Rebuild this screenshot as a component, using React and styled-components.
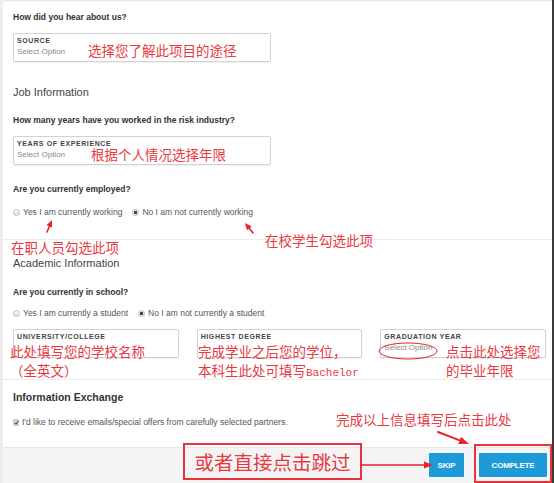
import React from "react";
import styled, { createGlobalStyle } from "styled-components";

const Global = createGlobalStyle`
  html, body { margin: 0; padding: 0; background: #fff; }
  body { font-family: "Liberation Sans", Arial, sans-serif; }
  * { box-sizing: border-box; }
`;

const RED = "#e8393f";

const Page = styled.div`
  position: relative;
  width: 554px;
  height: 483px;
  overflow: hidden;
  background: #ededed;
  display: flex;
`;

const Card = styled.div`
  margin-left: 3px;
  width: 551px;
  height: 483px;
  background: #fff;
  border-right: 2px solid #3b3b3b;
  display: flex;
  flex-direction: column;
  box-shadow: inset 0 3px 2px -2px rgba(0, 0, 0, 0.14);
`;

const Body = styled.div`
  padding: 12px 6px 0 10px;
  display: flex;
  flex-direction: column;
`;

const Question = styled.div`
  margin-top: ${(p) => p.$mt || 0}px;
  font-size: 8.5px;
  line-height: 10px;
  font-weight: bold;
  color: #333;
`;

const SectionTitle = styled.div`
  margin-top: ${(p) => p.$mt || 0}px;
  font-size: 11px;
  line-height: 14px;
  color: #444;
`;

const StrongTitle = styled(SectionTitle)`
  font-size: 10.5px;
  font-weight: bold;
  color: #333;
`;

const Divider = styled.div`
  margin: ${(p) => p.$mt || 0}px -6px 0 -10px;
  height: 1px;
  background: #ececec;
`;

const FieldGrid = styled.div`
  margin-top: ${(p) => p.$mt || 0}px;
  display: grid;
  grid-template-columns: repeat(${(p) => p.$cols}, 1fr);
  column-gap: 18px;
`;

const Field = styled.div`
  height: 29px;
  border: 1px solid #d2d2d2;
  border-radius: 2px;
  box-shadow: 0 1px 1px rgba(0, 0, 0, 0.06);
  padding: 2px 4px 0 3px;
  background: #fff;
`;

const FieldLabel = styled.div`
  font-size: 7px;
  line-height: 9px;
  font-weight: bold;
  letter-spacing: 0.6px;
  color: #444;
`;

const FieldValue = styled.div`
  margin-top: 2px;
  font-size: 8px;
  line-height: 10px;
  color: #8a8a8a;
  height: 10px;
`;

const RadioRow = styled.div`
  margin-top: ${(p) => p.$mt || 0}px;
  display: flex;
  align-items: center;
  height: 10px;
`;

const RadioOption = styled.label`
  display: inline-flex;
  align-items: center;
  gap: 3px;
  margin-right: ${(p) => p.$gap || 11}px;
  font-size: 8.5px;
  line-height: 10px;
  color: #555;
`;

const RadioDot = styled.span`
  width: 7px;
  height: 7px;
  border-radius: 50%;
  border: 1px solid #bdbdbd;
  background: ${(p) =>
    p.$on ? "radial-gradient(circle, #444 0 1.4px, #ececec 1.8px)" : "linear-gradient(#fdfdfd, #dcdcdc)"};
  flex: none;
`;

const CheckRow = styled.div`
  margin-top: ${(p) => p.$mt || 0}px;
  display: flex;
  align-items: center;
  gap: 3px;
  font-size: 8.5px;
  line-height: 10px;
  color: #555;
`;

const CheckBox = styled.span`
  width: 6px;
  height: 7px;
  background: #cfcfcf;
  border-radius: 1px;
  display: inline-flex;
  align-items: center;
  justify-content: center;
  flex: none;
`;

const Footer = styled.div`
  margin-top: ${(p) => p.$mt || 0}px;
  height: 37px;
  background: #f4f4f4;
  border-top: 1px solid #e6e6e6;
  display: flex;
  justify-content: flex-end;
  align-items: flex-start;
  gap: 15px;
  padding: 5px 5px 0 0;
`;

const Button = styled.button`
  width: ${(p) => p.$w}px;
  height: 24px;
  border: none;
  border-radius: 1px;
  background: #1c9bd8;
  color: #fff;
  font-family: "Liberation Sans", Arial, sans-serif;
  font-weight: bold;
  font-size: 8px;
  letter-spacing: -0.2px;
  padding: 0;
`;

const Note = styled.span`
  position: absolute;
  left: ${(p) => p.$x}px;
  top: ${(p) => p.$y}px;
  font-family: "Noto Sans CJK SC", sans-serif;
  font-size: ${(p) => p.$size || 13.5}px;
  line-height: 1;
  color: ${RED};
  white-space: nowrap;
`;

const Mono = styled.span`
  font-family: "Liberation Mono", monospace;
  font-size: 11px;
`;

const Frame = styled.div`
  position: absolute;
  left: ${(p) => p.$x}px;
  top: ${(p) => p.$y}px;
  width: ${(p) => p.$w}px;
  height: ${(p) => p.$h}px;
  border: 2px solid #e8333a;
  display: flex;
  align-items: center;
  justify-content: center;
`;

const FrameText = styled.span`
  font-family: "Noto Sans CJK SC", sans-serif;
  font-size: 19.5px;
  line-height: 1;
  color: ${RED};
  white-space: nowrap;
`;

const Overlay = styled.svg`
  position: absolute;
  left: 0;
  top: 0;
  pointer-events: none;
`;

function Arrow({ x1, y1, x2, y2, len = 8, w = 3.5, sw = 1.6 }) {
  const dx = x2 - x1;
  const dy = y2 - y1;
  const d = Math.hypot(dx, dy);
  const ux = dx / d;
  const uy = dy / d;
  const bx = x2 - ux * len;
  const by = y2 - uy * len;
  const px = -uy * w;
  const py = ux * w;
  return (
    <g>
      <line x1={x1} y1={y1} x2={bx} y2={by} stroke="#e8232b" strokeWidth={sw} strokeLinecap="round" />
      <polygon points={`${x2},${y2} ${bx + px},${by + py} ${bx - px},${by - py}`} fill="#e8232b" />
    </g>
  );
}

function Radio({ on, children, gap }) {
  return (
    <RadioOption $gap={gap}>
      <RadioDot $on={on} />
      {children}
    </RadioOption>
  );
}

function Select({ label, value }) {
  return (
    <Field>
      <FieldLabel>{label}</FieldLabel>
      <FieldValue>{value}</FieldValue>
    </Field>
  );
}

export default function App() {
  return (
    <>
      <Global />
      <Page>
        <Card>
          <Body>
            <Question>How did you hear about us?</Question>
            <FieldGrid $cols={2} $mt={11}>
              <Select label="SOURCE" value="Select Option" />
            </FieldGrid>

            <SectionTitle $mt={23}>Job Information</SectionTitle>
            <Question $mt={16}>How many years have you worked in the risk industry?</Question>
            <FieldGrid $cols={2} $mt={11}>
              <Select label="YEARS OF EXPERIENCE" value="Select Option" />
            </FieldGrid>

            <Question $mt={19}>Are you currently employed?</Question>
            <RadioRow $mt={13}>
              <Radio gap={10}>Yes I am currently working</Radio>
              <Radio on>No I am not currently working</Radio>
            </RadioRow>
            <Divider $mt={22} />

            <SectionTitle $mt={16}>Academic Information</SectionTitle>
            <Question $mt={17}>Are you currently in school?</Question>
            <RadioRow $mt={11}>
              <Radio gap={10}>Yes I am currently a student</Radio>
              <Radio on>No I am not currently a student</Radio>
            </RadioRow>
            <FieldGrid $cols={3} $mt={11}>
              <Select label="UNIVERSITY/COLLEGE" value="" />
              <Select label="HIGHEST DEGREE" value="" />
              <Select label="GRADUATION YEAR" value="Select Option" />
            </FieldGrid>
            <Divider $mt={21} />

            <StrongTitle $mt={10}>Information Exchange</StrongTitle>
            <CheckRow $mt={13}>
              <CheckBox>
                <svg width="5" height="5" viewBox="0 0 10 10">
                  <path d="M1 5.5 L4 8.5 L9 1.5" fill="none" stroke="#333" strokeWidth="2" />
                </svg>
              </CheckBox>
              I'd like to receive emails/special offers from carefully selected partners.
            </CheckRow>
          </Body>
          <Footer $mt={20}>
            <Button $w={35}>SKIP</Button>
            <Button $w={68}>COMPLETE</Button>
          </Footer>
        </Card>

        <Note $x={88} $y={44}>选择您了解此项目的途径</Note>
        <Note $x={91} $y={148}>根据个人情况选择年限</Note>
        <Note $x={11} $y={241}>在职人员勾选此项</Note>
        <Note $x={265} $y={234}>在校学生勾选此项</Note>
        <Note $x={10} $y={345}>此处填写您的学校名称</Note>
        <Note $x={10} $y={364}>（全英文）</Note>
        <Note $x={198} $y={345}>完成学业之后您的学位，</Note>
        <Note $x={198} $y={364}>
          本科生此处可填写<Mono>Bachelor</Mono>
        </Note>
        <Note $x={446} $y={345}>点击此处选择您</Note>
        <Note $x={446} $y={364}>的毕业年限</Note>
        <Note $x={336} $y={413}>完成以上信息填写后点击此处</Note>

        <Frame $x={183} $y={443} $w={179} $h={37}>
          <FrameText>或者直接点击跳过</FrameText>
        </Frame>
        <Frame $x={474} $y={444} $w={78} $h={39} />

        <Overlay width="554" height="483" viewBox="0 0 554 483">
          <Arrow x1={47} y1={232} x2={52} y2={220} len={7} w={3} />
          <Arrow x1={253} y1={233} x2={245} y2={223} len={7} w={3} />
          <Arrow x1={438} y1={432} x2={469} y2={444} len={10} w={4} sw={2} />
          <Arrow x1={362} y1={465} x2={433} y2={465} len={9} w={3.5} />
          <ellipse cx={408} cy={351} rx={29} ry={8} fill="none" stroke="#e8232b" strokeWidth={1} />
        </Overlay>
      </Page>
    </>
  );
}
